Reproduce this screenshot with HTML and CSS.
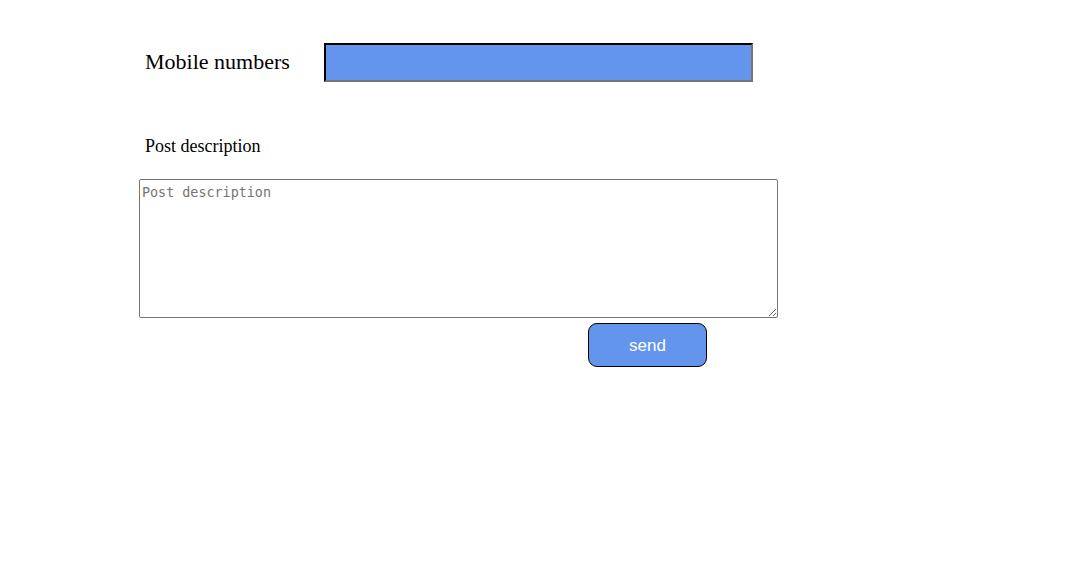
FILE: index.html
```html
<!DOCTYPE html>
<html>
<head>
<meta charset="utf-8">
<link rel="stylesheet" href="styles.css">
</head>
<body>
<form class="form">
  <div class="row">
    <label class="label-lg" for="mobile">Mobile numbers</label>
    <input class="mobile" id="mobile" type="text">
  </div>
  <label class="label-md" for="desc">Post description</label>
  <textarea class="desc" id="desc" placeholder="Post description"></textarea>
  <div class="actions">
    <button class="send" type="button">send</button>
  </div>
</form>
</body>
</html>
```
FILE: styles.css
```css
html, body {
  margin: 0;
  padding: 0;
  background: #fff;
}
body {
  font-family: "Liberation Serif", "Times New Roman", serif;
  color: #000;
}
.form {
  display: flex;
  flex-direction: column;
  align-items: flex-start;
  padding: 43px 0 0 139px;
}
.row {
  display: flex;
  align-items: center;
  padding-left: 6px;
}
.label-lg {
  font-size: 22px;
  width: 179px;
  margin-top: -2px;
}
.mobile {
  box-sizing: border-box;
  width: 429px;
  height: 39px;
  margin: 0;
  background: #6495ed;
  border: 2px inset #767676;
  border-top-color: #222;
  border-left-color: #222;
  border-bottom-color: #767676;
  border-right-color: #767676;
}
.label-md {
  font-size: 18px;
  margin: 54px 0 0 6px;
  line-height: 21px;
}
.desc {
  box-sizing: border-box;
  width: 639px;
  height: 139px;
  margin-top: 22px;
  padding: 5px 2px 2px;
  border: 1px solid #767676;
  border-radius: 2px;
  font-family: "DejaVu Sans Mono", monospace;
  font-size: 13.4px;
  resize: both;
}
.desc::placeholder {
  color: #757575;
}
.actions {
  display: flex;
  padding-left: 449px;
  margin-top: 5px;
}
.send {
  box-sizing: border-box;
  width: 119px;
  height: 44px;
  background: #6495ed;
  color: #fff;
  border: 1.5px solid #000;
  border-radius: 9px;
  font-family: "Liberation Sans", Arial, sans-serif;
  font-size: 17px;
  padding: 2px 0 0;
}
```
